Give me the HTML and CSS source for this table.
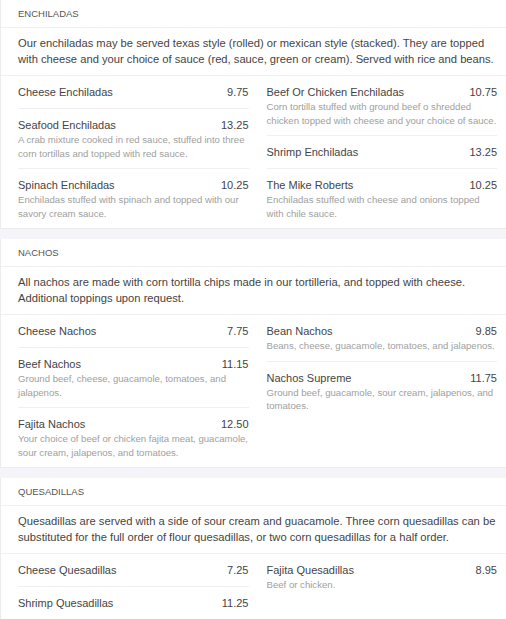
FILE: index.html
```html
<!DOCTYPE html>
<html>
<head>
<meta charset="utf-8">
<link rel="stylesheet" href="styles.css">
</head>
<body>
<div class="menu">
  <section class="card">
    <div class="sec-head">Enchiladas</div>
    <div class="sec-desc">Our enchiladas may be served texas style (rolled) or mexican style (stacked). They are topped with cheese and your choice of sauce (red, sauce, green or cream). Served with rice and beans.</div>
    <div class="items">
      <div class="col">
        <div class="item"><div class="item-top"><span>Cheese Enchiladas</span><span>9.75</span></div></div>
        <div class="item"><div class="item-top"><span>Seafood Enchiladas</span><span>13.25</span></div><div class="item-desc">A crab mixture cooked in red sauce, stuffed into three corn tortillas and topped with red sauce.</div></div>
        <div class="item"><div class="item-top"><span>Spinach Enchiladas</span><span>10.25</span></div><div class="item-desc">Enchiladas stuffed with spinach and topped with our savory cream sauce.</div></div>
      </div>
      <div class="col">
        <div class="item"><div class="item-top"><span>Beef Or Chicken Enchiladas</span><span>10.75</span></div><div class="item-desc">Corn tortilla stuffed with ground beef o shredded chicken topped with cheese and your choice of sauce.</div></div>
        <div class="item"><div class="item-top"><span>Shrimp Enchiladas</span><span>13.25</span></div></div>
        <div class="item"><div class="item-top"><span>The Mike Roberts</span><span>10.25</span></div><div class="item-desc">Enchiladas stuffed with cheese and onions topped with chile sauce.</div></div>
      </div>
    </div>
  </section>
  <section class="card">
    <div class="sec-head">Nachos</div>
    <div class="sec-desc">All nachos are made with corn tortilla chips made in our tortilleria, and topped with cheese. Additional toppings upon request.</div>
    <div class="items">
      <div class="col">
        <div class="item"><div class="item-top"><span>Cheese Nachos</span><span>7.75</span></div></div>
        <div class="item"><div class="item-top"><span>Beef Nachos</span><span>11.15</span></div><div class="item-desc">Ground beef, cheese, guacamole, tomatoes, and jalapenos.</div></div>
        <div class="item"><div class="item-top"><span>Fajita Nachos</span><span>12.50</span></div><div class="item-desc">Your choice of beef or chicken fajita meat, guacamole, sour cream, jalapenos, and tomatoes.</div></div>
      </div>
      <div class="col">
        <div class="item"><div class="item-top"><span>Bean Nachos</span><span>9.85</span></div><div class="item-desc">Beans, cheese, guacamole, tomatoes, and jalapenos.</div></div>
        <div class="item"><div class="item-top"><span>Nachos Supreme</span><span>11.75</span></div><div class="item-desc">Ground beef, guacamole, sour cream, jalapenos, and tomatoes.</div></div>
      </div>
    </div>
  </section>
  <section class="card">
    <div class="sec-head">Quesadillas</div>
    <div class="sec-desc">Quesadillas are served with a side of sour cream and guacamole. Three corn quesadillas can be substituted for the full order of flour quesadillas, or two corn quesadillas for a half order.</div>
    <div class="items">
      <div class="col">
        <div class="item"><div class="item-top"><span>Cheese Quesadillas</span><span>7.25</span></div></div>
        <div class="item"><div class="item-top"><span>Shrimp Quesadillas</span><span>11.25</span></div></div>
      </div>
      <div class="col">
        <div class="item"><div class="item-top"><span>Fajita Quesadillas</span><span>8.95</span></div><div class="item-desc">Beef or chicken.</div></div>
      </div>
    </div>
  </section>
</div>
</body>
</html>
```
FILE: styles.css
```css
html, body {
  margin: 0;
  padding: 0;
}
body {
  background: #f4f4f9;
  font-family: "Liberation Sans", Arial, sans-serif;
  color: #333;
}
.menu {
  display: flex;
  flex-direction: column;
  gap: 10px;
}
.card {
  background: #fff;
  border-left: 1px solid #ececf0;
  border-bottom: 1px solid #ececf0;
}
.sec-head {
  padding: 8px 17px 7px;
  font-size: 9.5px;
  line-height: 12px;
  text-transform: uppercase;
  color: #555;
  border-bottom: 1px solid #f0f0f0;
}
.sec-desc {
  padding: 7px 6px 8px 17px;
  font-size: 11.2px;
  line-height: 16px;
  color: #444;
  border-bottom: 1px solid #f0f0f0;
}
.items {
  display: grid;
  grid-template-columns: 1fr 1fr;
  padding-left: 8px;
}
.col {
  padding: 0 9px;
}
.item {
  padding: 8px 0 8px;
  border-bottom: 1px solid #f0f0f0;
}
.item:last-child {
  border-bottom: none;
  padding-bottom: 8px;
}
.item-top {
  display: flex;
  justify-content: space-between;
  font-size: 11px;
  line-height: 16px;
  color: #444;
}
.item-desc {
  font-size: 9.6px;
  line-height: 13.5px;
  color: #a0a0a0;
}
```
